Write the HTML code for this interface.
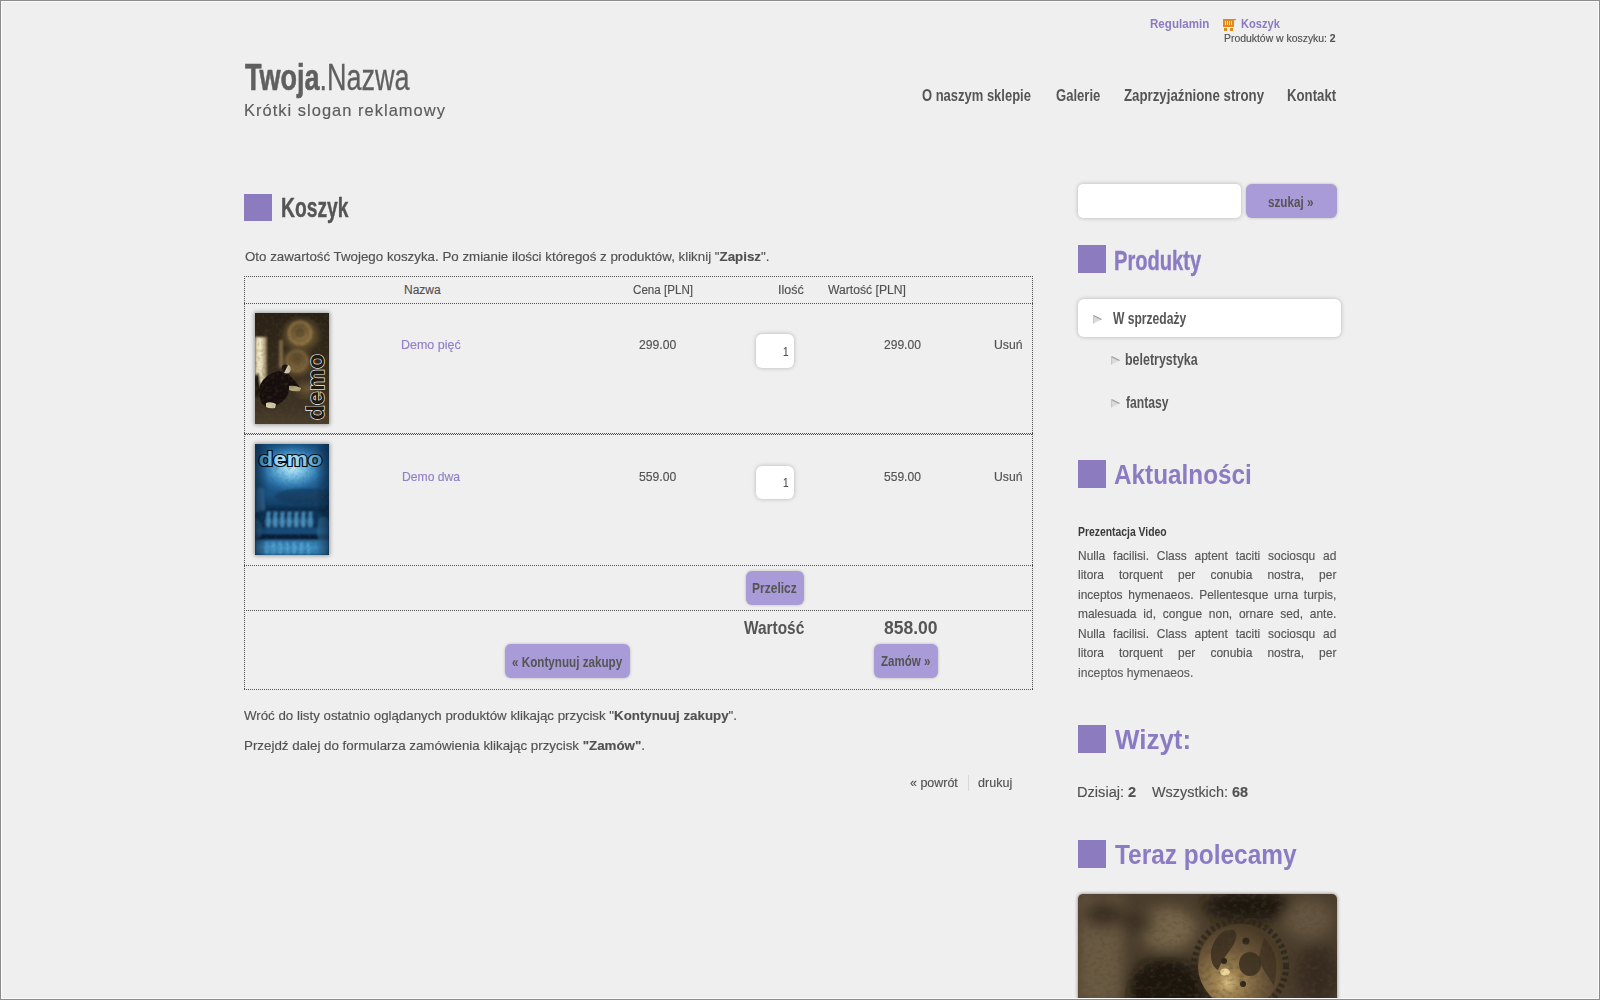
<!DOCTYPE html>
<html lang="pl"><head><meta charset="utf-8"><title>Koszyk</title><style>
*{margin:0;padding:0;box-sizing:border-box}
html,body{width:1600px;height:1000px;overflow:hidden}
body{position:relative;background:#efefef;font-family:"Liberation Sans", sans-serif;}
.t{position:absolute;white-space:nowrap;line-height:1;transform-origin:0 0}
.t.r{-webkit-text-stroke:0.15px currentColor}
.t b{font-weight:700}
.bm{display:inline-block;width:0;height:0;vertical-align:baseline}

.frame{position:absolute;left:0;top:0;width:1600px;height:1000px;border:1px solid #8c8c8c;box-shadow:inset 0 0 0 1px #fbfbfb;z-index:50;pointer-events:none}
.sq{position:absolute;width:28px;height:28px;background:#8c7cbf}
.box{position:absolute;background:#fff;border-radius:5px;box-shadow:0 0 4px rgba(0,0,0,.25)}
.btn{position:absolute;background:#a99bd8;border-radius:6px;box-shadow:0 0 3px rgba(0,0,0,.25)}
.hl{position:absolute;height:1px;background-image:linear-gradient(90deg,#505050 50%,transparent 50%);background-size:2px 1px}
.vl{position:absolute;width:1px;background-image:linear-gradient(180deg,#505050 50%,transparent 50%);background-size:1px 2px}
.pl{position:absolute;left:1078px;font-size:13px;line-height:1;white-space:nowrap;text-align:justify;text-align-last:justify;color:#555555;transform-origin:0 0;-webkit-text-stroke:0.15px currentColor}
.arr{position:absolute;width:0;height:0;border-top:4.5px solid transparent;border-bottom:4.5px solid transparent;border-left:8px solid #b5b5b5}
.thumb{position:absolute;box-shadow:0 0 4px 1px rgba(0,0,0,.35)}
</style></head><body>
<div class="frame"></div>
<svg style="position:absolute;left:1222px;top:18px" width="15" height="13" viewBox="0 0 15 13" shape-rendering="crispEdges">
<rect x="1" y="1.4" width="11" height="7.4" fill="#e08a1a"/>
<path d="M10 1.6 L13.5 0.8 L14 1.6 L13.6 2.2 L11.5 2.6Z" fill="#e08a1a" shape-rendering="auto"/>
<rect x="3" y="3" width="1" height="4" fill="#fbe6c4"/><rect x="5" y="3" width="1" height="4" fill="#fbe6c4"/><rect x="7" y="3" width="1" height="4" fill="#f8e0b8"/><rect x="9" y="3" width="1" height="4" fill="#f2d2a0"/>
<rect x="2" y="10" width="3" height="3" fill="#e08a1a"/><rect x="8" y="10" width="3" height="3" fill="#e08a1a"/>
</svg>
<div class="sq" style="left:1078px;top:245px"></div>
<div class="sq" style="left:1078px;top:460px"></div>
<div class="sq" style="left:1078px;top:725px"></div>
<div class="sq" style="left:1078px;top:840px"></div>
<div class="sq" style="left:244px;top:194px;height:27px"></div>
<div class="hl" style="left:244px;top:276px;width:789px"></div>
<div class="hl" style="left:244px;top:303px;width:789px"></div>
<div class="hl" style="left:244px;top:433px;width:789px"></div>
<div class="hl" style="left:244px;top:565px;width:789px"></div>
<div class="hl" style="left:244px;top:610px;width:789px"></div>
<div class="hl" style="left:244px;top:689px;width:789px"></div>
<div class="hl" style="left:245px;top:434px;width:788px"></div>
<div class="vl" style="left:244px;top:276px;height:414px"></div>
<div class="vl" style="left:1032px;top:276px;height:414px"></div>
<div class="box" style="left:756px;top:333.5px;width:37.5px;height:34.5px;border-radius:6px"></div>
<div class="box" style="left:756px;top:465.5px;width:37.5px;height:33.5px;border-radius:6px"></div>
<div class="btn" style="left:746px;top:571px;width:58px;height:34px"></div>
<div class="btn" style="left:505px;top:644px;width:125px;height:34px"></div>
<div class="btn" style="left:874px;top:644px;width:64px;height:34px"></div>
<div style="position:absolute;left:968px;top:775px;width:1px;height:16px;background:#d8d8d8"></div>
<div class="box" style="left:1078px;top:184px;width:163px;height:34px;border-radius:5px"></div>
<div class="btn" style="left:1246px;top:184px;width:91px;height:34px"></div>
<div class="box" style="left:1078px;top:299px;width:263px;height:38px;border-radius:6px"></div>
<svg style="position:absolute;left:1093px;top:314.5px" width="9" height="9" viewBox="0 0 9 9"><path d="M0.5 0.5L8.5 4.5L0.5 8.5Z" fill="#dadada"/><path d="M0.5 0.5L8.5 4.5" stroke="#999" stroke-width="1.1"/><path d="M0.6 0.5V8.5" stroke="#c4c4c4" stroke-width="1"/></svg>
<svg style="position:absolute;left:1111px;top:355.5px" width="9" height="9" viewBox="0 0 9 9"><path d="M0.5 0.5L8.5 4.5L0.5 8.5Z" fill="#dadada"/><path d="M0.5 0.5L8.5 4.5" stroke="#999" stroke-width="1.1"/><path d="M0.6 0.5V8.5" stroke="#c4c4c4" stroke-width="1"/></svg>
<svg style="position:absolute;left:1111px;top:398.5px" width="9" height="9" viewBox="0 0 9 9"><path d="M0.5 0.5L8.5 4.5L0.5 8.5Z" fill="#dadada"/><path d="M0.5 0.5L8.5 4.5" stroke="#999" stroke-width="1.1"/><path d="M0.6 0.5V8.5" stroke="#c4c4c4" stroke-width="1"/></svg>
<svg class="thumb" style="left:255px;top:313px" width="74" height="111" viewBox="0 0 74 111">
<defs>
<filter id="grain1" x="0" y="0" width="100%" height="100%"><feTurbulence type="fractalNoise" baseFrequency="0.3" numOctaves="2" seed="3"/><feColorMatrix values="0 0 0 0 0.1  0 0 0 0 0.08  0 0 0 0 0.04  0 0 0 -2 1.1"/></filter>
<filter id="bl1" x="-20%" y="-20%" width="140%" height="140%"><feGaussianBlur stdDeviation="1.2"/></filter>
<filter id="bl2" x="-20%" y="-20%" width="140%" height="140%"><feGaussianBlur stdDeviation="0.6"/></filter>
<radialGradient id="t1g1" cx="0.5" cy="0.5" r="0.5"><stop offset="0" stop-color="#a8884e" stop-opacity=".95"/><stop offset=".6" stop-color="#7a6238" stop-opacity=".6"/><stop offset="1" stop-color="#7a6238" stop-opacity="0"/></radialGradient>
<linearGradient id="t1door" x1="0" y1="0" x2="1" y2="0"><stop offset="0" stop-color="#d8c898"/><stop offset=".45" stop-color="#f6efd0"/><stop offset="1" stop-color="#8a7650"/></linearGradient>
<linearGradient id="t1bg" x1="0" y1="0" x2="0" y2="1"><stop offset="0" stop-color="#2a2116"/><stop offset=".5" stop-color="#342a1c"/><stop offset=".85" stop-color="#3e3324"/><stop offset="1" stop-color="#4a3e2c"/></linearGradient>
</defs>
<rect width="74" height="111" fill="url(#t1bg)"/>
<g filter="url(#bl1)">
<ellipse cx="46" cy="22" rx="22" ry="20" fill="url(#t1g1)"/>
<ellipse cx="42" cy="50" rx="20" ry="17" fill="url(#t1g1)" opacity=".85"/>
<ellipse cx="52" cy="76" rx="16" ry="12" fill="url(#t1g1)" opacity=".5"/>
<rect x="0" y="24" width="12" height="50" fill="url(#t1door)"/>
<path d="M0 62 L4 60 L7 82 L0 84Z" fill="#1a140c"/>
<rect x="24" y="27" width="4" height="28" fill="#8c7650" opacity=".8"/>
</g>
<g filter="url(#bl1)">
<circle cx="45" cy="20" r="11" fill="none" stroke="#c09a5a" stroke-width="3" opacity=".45"/>
<circle cx="45" cy="20" r="5" fill="#3a2c18" opacity=".5"/>
<circle cx="42" cy="48" r="10" fill="none" stroke="#a88550" stroke-width="3" opacity=".4"/>
<circle cx="42" cy="48" r="4.5" fill="#3a2c18" opacity=".45"/>
</g>
<g filter="url(#bl2)">
<path d="M5 72 Q10 61 24 58 L31 59 Q37 64 44 73 L45 77 Q39 77 34 75 Q34 83 28 88 L22 92 Q14 95 8 92 Q3 86 5 72Z" fill="#17110a"/>
<ellipse cx="31.5" cy="56" rx="4.2" ry="4.6" fill="#cfc6b0"/>
<path d="M27 53 Q30 50 33 52 L29 60 Q26 58 27 53Z" fill="#1a140c"/>
<path d="M11 90 Q16 88 21 91 L20 95 Q15 96 11 94Z" fill="#d8cca8"/>
<path d="M34 73 Q40 72 46 75 L45 78 Q39 79 34 77Z" fill="#d0c090" opacity=".85"/>
</g>
<rect width="74" height="111" filter="url(#grain1)" opacity=".35"/>
<text transform="translate(69 107) rotate(-90)" font-family="Liberation Sans" font-weight="700" font-size="24" textLength="66" lengthAdjust="spacingAndGlyphs" fill="#221a10" stroke="#f4f4f4" stroke-width="1.3" paint-order="stroke">demo</text>
</svg>
<svg class="thumb" style="left:255px;top:444px" width="74" height="111" viewBox="0 0 74 111">
<defs>
<filter id="bl3" x="-20%" y="-20%" width="140%" height="140%"><feGaussianBlur stdDeviation="0.9"/></filter>
<filter id="grain2" x="0" y="0" width="100%" height="100%"><feTurbulence type="fractalNoise" baseFrequency="0.3" numOctaves="2" seed="5"/><feColorMatrix values="0 0 0 0 0.02  0 0 0 0 0.08  0 0 0 0 0.15  0 0 0 -2 1.1"/></filter>
<radialGradient id="t2glow" cx="0.5" cy="0.5" r="0.5"><stop offset="0" stop-color="#c8ecf8"/><stop offset=".3" stop-color="#78c2e6"/><stop offset=".65" stop-color="#3583ba" stop-opacity=".8"/><stop offset="1" stop-color="#1c5a8c" stop-opacity="0"/></radialGradient>
<linearGradient id="t2bg" x1="0" y1="0" x2="0" y2="1"><stop offset="0" stop-color="#154a78"/><stop offset=".25" stop-color="#1f5f94"/><stop offset=".45" stop-color="#1a5282"/><stop offset=".56" stop-color="#123c62"/><stop offset="1" stop-color="#123c62"/></linearGradient>
<linearGradient id="t2side" x1="0" y1="0" x2="1" y2="0"><stop offset="0" stop-color="#061426" stop-opacity=".55"/><stop offset=".18" stop-color="#061426" stop-opacity="0"/><stop offset=".82" stop-color="#061426" stop-opacity="0"/><stop offset="1" stop-color="#061426" stop-opacity=".55"/></linearGradient>
<linearGradient id="t2txt" x1="0" y1="0" x2="1" y2="0"><stop offset="0" stop-color="#2e6f9e"/><stop offset=".35" stop-color="#b8e4f6"/><stop offset=".65" stop-color="#9ad6f0"/><stop offset="1" stop-color="#3f88b8"/></linearGradient>
<linearGradient id="t2refl" x1="0" y1="0" x2="0" y2="1"><stop offset="0" stop-color="#2a6e9e"/><stop offset=".5" stop-color="#3e8ec0"/><stop offset="1" stop-color="#2a72a4"/></linearGradient>
</defs>
<rect width="74" height="111" fill="url(#t2bg)"/>
<g filter="url(#bl3)">
<ellipse cx="37" cy="24" rx="40" ry="28" fill="url(#t2glow)"/>
<ellipse cx="50" cy="52" rx="30" ry="8" fill="#0e3050" opacity=".5"/>
<rect x="0" y="63" width="74" height="4" fill="#0b2a48"/>
<rect x="0" y="67" width="74" height="17" fill="#0f3558"/>
<g fill="#4f97c6" opacity=".9">
<path d="M12 68h3.5l-1 4 1.5 5 -1 6h-3.5l-1-6 1.5-5z"/><path d="M19 68h3.5l-1 4 1.5 5 -1 6h-3.5l-1-6 1.5-5z"/><path d="M26 68h3.5l-1 4 1.5 5 -1 6h-3.5l-1-6 1.5-5z"/><path d="M33 68h3.5l-1 4 1.5 5 -1 6h-3.5l-1-6 1.5-5z"/><path d="M40 68h3.5l-1 4 1.5 5 -1 6h-3.5l-1-6 1.5-5z"/><path d="M47 68h3.5l-1 4 1.5 5 -1 6h-3.5l-1-6 1.5-5z"/><path d="M54 68h3.5l-1 4 1.5 5 -1 6h-3.5l-1-6 1.5-5z"/>
</g>
<rect x="0" y="84" width="74" height="6" fill="#174c78"/>
<rect x="0" y="90" width="74" height="6" fill="#081c34"/>
<rect x="0" y="96" width="74" height="15" fill="url(#t2refl)"/>
<g fill="#6ab8e2" opacity=".6"><rect x="10" y="98" width="2.5" height="12"/><rect x="17" y="98" width="2.5" height="12"/><rect x="24" y="98" width="2.5" height="12"/><rect x="31" y="98" width="2.5" height="12"/><rect x="38" y="98" width="2.5" height="12"/><rect x="45" y="98" width="2.5" height="12"/><rect x="52" y="98" width="2.5" height="12"/></g>
<path d="M1 46 Q5 40 9 46 L10 66 L0 68Z" fill="#3a7aa8" opacity=".75"/>
<path d="M64 74 Q74 70 74 80 L74 111 L62 111 Q66 96 62 90Z" fill="#3a82b2" opacity=".6"/>
<path d="M0 74 Q8 76 6 92 L0 96Z" fill="#3a82b2" opacity=".55"/>
</g>
<rect width="74" height="111" fill="url(#t2side)"/>
<rect width="74" height="111" filter="url(#grain2)" opacity=".3"/>
<text x="3.5" y="22" font-family="Liberation Sans" font-weight="700" font-size="21" textLength="64" lengthAdjust="spacingAndGlyphs" fill="url(#t2txt)" stroke="#050c14" stroke-width="2.2" paint-order="stroke">demo</text>
</svg>
<svg class="thumb" style="left:1078px;top:894px;border-radius:5px 5px 0 0;box-shadow:0 0 3px 1px rgba(0,0,0,.3)" width="259" height="110" viewBox="0 0 259 110">
<defs>
<filter id="grain3" x="0" y="0" width="100%" height="100%"><feTurbulence type="fractalNoise" baseFrequency="0.18 0.25" numOctaves="3" seed="7"/><feColorMatrix values="0 0 0 0 0.08  0 0 0 0 0.06  0 0 0 0 0.03  0 0 0 -2.4 1.3"/></filter>
<filter id="bl4" x="-30%" y="-30%" width="160%" height="160%" filterUnits="objectBoundingBox"><feGaussianBlur stdDeviation="7"/></filter>
<filter id="bl5" x="-10%" y="-10%" width="120%" height="120%"><feGaussianBlur stdDeviation="0.7"/></filter>
<radialGradient id="sgear" cx="0.35" cy="0.7" r="0.7"><stop offset="0" stop-color="#d8bc80"/><stop offset=".2" stop-color="#a08452"/><stop offset=".6" stop-color="#6e583a"/><stop offset="1" stop-color="#4a3b28"/></radialGradient>
</defs>
<rect width="259" height="110" fill="#4a3d2c"/>
<g filter="url(#bl4)">
<rect x="0" y="0" width="45" height="110" fill="#6a5a42"/>
<ellipse cx="90" cy="35" rx="28" ry="22" fill="#76654a"/>
<ellipse cx="25" cy="20" rx="20" ry="14" fill="#2e2418" opacity=".8"/>
<ellipse cx="170" cy="12" rx="45" ry="16" fill="#1c160e"/>
<ellipse cx="60" cy="30" rx="18" ry="10" fill="#2e2418" opacity=".7"/>
<ellipse cx="88" cy="98" rx="42" ry="36" fill="#1e180f"/>
<ellipse cx="230" cy="25" rx="25" ry="20" fill="#6a5a44" opacity=".8"/>
<ellipse cx="240" cy="80" rx="22" ry="30" fill="#2c2418" opacity=".7"/>
</g>
<g filter="url(#bl5)">
<circle cx="88" cy="104" r="40" fill="none" stroke="#3a2e20" stroke-width="3" opacity=".6"/>
<circle cx="162" cy="72" r="46" fill="none" stroke="#2e2418" stroke-width="6" stroke-dasharray="3.2 3" opacity=".85"/>
<circle cx="162" cy="72" r="42" fill="url(#sgear)"/>
<path d="M133 56 Q140 34 156 36 Q162 42 152 56 Q144 66 140 76 Q132 72 133 56Z" fill="#3a2e20" opacity=".85"/>
<ellipse cx="172" cy="70" rx="11" ry="12" fill="#3a2e20" opacity=".85"/>
<path d="M186 44 Q204 60 196 92 Q188 80 180 66Z" fill="#3a2e20" opacity=".7"/>
<circle cx="168" cy="47" r="3.5" fill="#2e251a"/>
<circle cx="146" cy="67" r="3" fill="#2e251a"/>
<circle cx="165" cy="90" r="3" fill="#2e251a"/>
<ellipse cx="147" cy="78" rx="5" ry="3.5" fill="#f8e4a8" opacity=".85"/>
</g>
<rect width="259" height="110" filter="url(#grain3)" opacity=".4"/>
</svg>
<div class="t" id="reg" style="left:1150.12px;top:17.00px;font-size:13.2px;font-weight:700;color:#8b7bc2;transform:scaleX(0.8788);">Regulamin</div>
<div class="t" id="kos" style="left:1241.16px;top:17.00px;font-size:13.2px;font-weight:700;color:#8b7bc2;transform:scaleX(0.8444);">Koszyk</div>
<div class="t r" id="prod" style="left:1224.00px;top:32.50px;font-size:10.6px;font-weight:400;color:#515151;transform:scaleX(0.9825);">Produktów w koszyku: <b>2</b></div>
<div class="t r" id="logo" style="left:244.50px;top:59.00px;font-size:37px;font-weight:400;color:#5f5f5f;-webkit-text-stroke:0.3px currentColor;transform:scaleX(0.7301);"><b style="-webkit-text-stroke:0.6px currentColor">Twoja</b>.Nazwa</div>
<div class="t r" id="slog" style="left:243.98px;top:101.60px;font-size:16.2px;font-weight:400;color:#5c5c5c;letter-spacing:1px;transform:scaleX(1.0178);">Krótki slogan reklamowy</div>
<div class="t" id="nav1" style="left:922.00px;top:88.00px;font-size:16.8px;font-weight:700;color:#555555;transform:scaleX(0.7730);">O naszym sklepie</div>
<div class="t" id="nav2" style="left:1055.60px;top:88.00px;font-size:16.8px;font-weight:700;color:#555555;transform:scaleX(0.7789);">Galerie</div>
<div class="t" id="nav3" style="left:1123.80px;top:88.00px;font-size:16.8px;font-weight:700;color:#555555;transform:scaleX(0.7904);">Zaprzyjaźnione strony</div>
<div class="t" id="nav4" style="left:1286.91px;top:88.00px;font-size:16.8px;font-weight:700;color:#555555;transform:scaleX(0.7869);">Kontakt</div>
<div class="t" id="h_kos" style="left:280.91px;top:194.30px;font-size:28px;font-weight:700;color:#555555;-webkit-text-stroke:0.4px currentColor;transform:scaleX(0.6878);">Koszyk</div>
<div class="t r" id="intro" style="left:244.50px;top:249.60px;font-size:13px;font-weight:400;color:#515151;transform:scaleX(1.0245);">Oto zawartość Twojego koszyka. Po zmianie ilości któregoś z produktów, kliknij "<b>Zapisz</b>".</div>
<div class="t r" id="th1" style="left:404.00px;top:283.80px;font-size:12px;font-weight:400;color:#515151;">Nazwa</div>
<div class="t r" id="th2" style="left:633.00px;top:283.80px;font-size:12px;font-weight:400;color:#515151;transform:scaleX(0.9677);">Cena [PLN]</div>
<div class="t r" id="th3" style="left:777.96px;top:283.80px;font-size:12px;font-weight:400;color:#515151;transform:scaleX(1.0417);">Ilość</div>
<div class="t r" id="th4" style="left:828.00px;top:283.80px;font-size:12px;font-weight:400;color:#515151;transform:scaleX(1.0132);">Wartość [PLN]</div>
<div class="t r" id="r1n" style="left:401.44px;top:338.20px;font-size:13px;font-weight:400;color:#9080c6;transform:scaleX(0.9607);">Demo pięć</div>
<div class="t r" id="r1p" style="left:639.00px;top:338.20px;font-size:13px;font-weight:400;color:#515151;transform:scaleX(0.9375);">299.00</div>
<div class="t r" id="r1v" style="left:884.40px;top:338.20px;font-size:13px;font-weight:400;color:#515151;transform:scaleX(0.9275);">299.00</div>
<div class="t r" id="r1u" style="left:994.06px;top:338.20px;font-size:13px;font-weight:400;color:#515151;transform:scaleX(0.9379);">Usuń</div>
<div class="t r" id="r1q" style="left:783.17px;top:345.60px;font-size:12px;font-weight:400;color:#515151;transform:scaleX(0.8333);">1</div>
<div class="t r" id="r2n" style="left:402.06px;top:469.60px;font-size:13px;font-weight:400;color:#9080c6;transform:scaleX(0.9355);">Demo dwa</div>
<div class="t r" id="r2p" style="left:639.00px;top:469.60px;font-size:13px;font-weight:400;color:#515151;transform:scaleX(0.9375);">559.00</div>
<div class="t r" id="r2v" style="left:884.40px;top:469.60px;font-size:13px;font-weight:400;color:#515151;transform:scaleX(0.9275);">559.00</div>
<div class="t r" id="r2u" style="left:994.06px;top:469.60px;font-size:13px;font-weight:400;color:#515151;transform:scaleX(0.9379);">Usuń</div>
<div class="t r" id="r2q" style="left:783.17px;top:477.20px;font-size:12px;font-weight:400;color:#515151;transform:scaleX(0.8333);">1</div>
<div class="t" id="przel" style="left:751.94px;top:581.10px;font-size:14px;font-weight:700;color:#555555;transform:scaleX(0.8588);">Przelicz</div>
<div class="t" id="wart" style="left:743.80px;top:620.00px;font-size:17.8px;font-weight:700;color:#555555;transform:scaleX(0.8667);">Wartość</div>
<div class="t" id="sum" style="left:883.80px;top:620.00px;font-size:17.8px;font-weight:700;color:#555555;transform:scaleX(0.9852);">858.00</div>
<div class="t" id="kont" style="left:512.00px;top:654.50px;font-size:14px;font-weight:700;color:#555555;transform:scaleX(0.8333);">« Kontynuuj zakupy</div>
<div class="t" id="zam" style="left:881.00px;top:654.40px;font-size:14px;font-weight:700;color:#555555;transform:scaleX(0.8250);">Zamów »</div>
<div class="t r" id="wroc" style="left:243.60px;top:708.50px;font-size:13px;font-weight:400;color:#515151;transform:scaleX(1.0222);">Wróć do listy ostatnio oglądanych produktów klikając przycisk "<b>Kontynuuj zakupy</b>".</div>
<div class="t r" id="przej" style="left:243.97px;top:739.00px;font-size:13px;font-weight:400;color:#515151;transform:scaleX(1.0257);">Przejdź dalej do formularza zamówienia klikając przycisk <b>"Zamów"</b>.</div>
<div class="t r" id="powr" style="left:909.70px;top:776.90px;font-size:12.2px;font-weight:400;color:#515151;transform:scaleX(1.0234);">« powrót</div>
<div class="t r" id="druk" style="left:978.00px;top:776.90px;font-size:12.2px;font-weight:400;color:#515151;transform:scaleX(1.0303);">drukuj</div>
<div class="t" id="szuk" style="left:1268.00px;top:194.50px;font-size:14px;font-weight:700;color:#555555;transform:scaleX(0.8333);">szukaj »</div>
<div class="t" id="h_prod" style="left:1114.48px;top:246.50px;font-size:28px;font-weight:700;color:#8b7bc2;-webkit-text-stroke:0.4px currentColor;transform:scaleX(0.7174);">Produkty</div>
<div class="t" id="m1" style="left:1113.00px;top:311.20px;font-size:15.8px;font-weight:700;color:#555555;transform:scaleX(0.7646);">W sprzedaży</div>
<div class="t" id="m2" style="left:1124.81px;top:352.20px;font-size:15.8px;font-weight:700;color:#555555;transform:scaleX(0.7880);">beletrystyka</div>
<div class="t" id="m3" style="left:1126.00px;top:395.40px;font-size:15.8px;font-weight:700;color:#555555;transform:scaleX(0.7709);">fantasy</div>
<div class="t" id="h_akt" style="left:1114.30px;top:461.80px;font-size:27px;font-weight:700;color:#8b7bc2;transform:scaleX(0.9007);">Aktualności</div>
<div class="t" id="prez" style="left:1078.00px;top:526.00px;font-size:12px;font-weight:700;color:#3a3a3a;transform:scaleX(0.8647);">Prezentacja Video</div>
<div class="t" id="h_wiz" style="left:1115.30px;top:727.00px;font-size:27px;font-weight:700;color:#8b7bc2;transform:scaleX(0.9597);">Wizyt:</div>
<div class="t r" id="dzis" style="left:1077.06px;top:783.90px;font-size:15.5px;font-weight:400;color:#515151;transform:scaleX(0.9419);">Dzisiaj: <b>2</b></div>
<div class="t r" id="wszy" style="left:1151.60px;top:783.90px;font-size:15.5px;font-weight:400;color:#515151;transform:scaleX(0.9291);">Wszystkich: <b>68</b></div>
<div class="t" id="h_ter" style="left:1115.30px;top:841.80px;font-size:27px;font-weight:700;color:#8b7bc2;transform:scaleX(0.9050);">Teraz polecamy</div>
<div class="t r" id="plast" style="left:1078.00px;top:665.50px;font-size:13px;font-weight:400;color:#5e5e5e;transform:scaleX(0.9385);">inceptos hymenaeos.</div>
<div class="pl" style="top:548.60px;width:280.87px;transform:scaleX(0.92)">Nulla facilisi. Class aptent taciti sociosqu ad</div>
<div class="pl" style="top:568.40px;width:280.87px;transform:scaleX(0.92)">litora torquent per conubia nostra, per</div>
<div class="pl" style="top:587.60px;width:280.87px;transform:scaleX(0.92)">inceptos hymenaeos. Pellentesque urna turpis,</div>
<div class="pl" style="top:606.90px;width:280.87px;transform:scaleX(0.92)">malesuada id, congue non, ornare sed, ante.</div>
<div class="pl" style="top:626.50px;width:280.87px;transform:scaleX(0.92)">Nulla facilisi. Class aptent taciti sociosqu ad</div>
<div class="pl" style="top:645.90px;width:280.87px;transform:scaleX(0.92)">litora torquent per conubia nostra, per</div>
</body></html>
